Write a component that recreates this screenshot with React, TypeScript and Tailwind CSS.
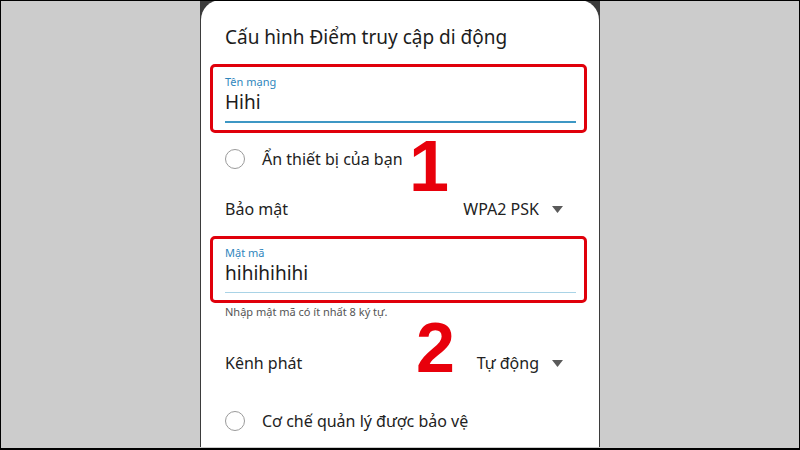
import React from 'react'

const font = { fontFamily: '"Noto Sans", "Open Sans", sans-serif' }

function Caret() {
    return (
        <svg width="11" height="7" viewBox="0 0 11 7" className="ml-[13px]">
            <path d="M0 0h11L5.5 7z" fill="#5a5a5a" />
        </svg>
    )
}

function Radio({ label }: { label: string }) {
    return (
        <div className="flex items-center h-[40px]">
            <div className="w-[20px] h-[20px] rounded-full border-[1.5px] border-[#9a9a9a]"></div>
            <span className="ml-[17px] text-[16px] text-[#222]">{label}</span>
        </div>
    )
}

function Field({ label, value, line, lineH, pt }: { label: string; value: string; line: string; lineH: string; pt: string }) {
    return (
        <div className={`-ml-[15px] w-[377px] border-[3px] border-[#e0000b] rounded-[5px] pl-[12px] ${pt}`}>
            <div className="text-[11px] leading-[14px] text-[#2f86bd]">{label}</div>
            <div className="text-[19px] leading-[26px] text-[#1c1c1c]">{value}</div>
            <div className={`mt-[6px] w-[351px] ${lineH} ${line}`}></div>
        </div>
    )
}

export default function App() {
    return (
        <div className="w-[800px] h-[450px] bg-[#cccccc] border border-black border-b-2 flex justify-center overflow-hidden" style={font}>
            <div className="w-[400px] h-full bg-[#3b3b3b] -mt-px">
                <div className="relative h-full bg-white rounded-t-[20px] mx-[1px] pl-[24px] pr-[36px] pt-[23px]">
                    <div className="text-[19px] leading-[28px] text-[#1c1c1c]">Cấu hình Điểm truy cập di động</div>

                    <div className="mt-[13px]">
                        <Field label="Tên mạng" value="Hihi" line="bg-[#3d97c4]" lineH="h-[2px]" pt="pt-[8px] pb-[7px]" />
                    </div>

                    <div className="mt-[6px]">
                        <Radio label="Ẩn thiết bị của bạn" />
                    </div>

                    <div className="mt-[10px] flex items-center justify-between h-[40px] text-[16px] text-[#222]">
                        <span>Bảo mật</span>
                        <div className="flex items-center">
                            <span>WPA2 PSK</span>
                            <Caret />
                        </div>
                    </div>

                    <div className="mt-[7px]">
                        <Field label="Mật mã" value="hihihihihi" line="bg-[#a9d3e6]" lineH="h-px" pt="pt-[7px] pb-[7px]" />
                    </div>

                    <div className="mt-[2px] text-[11px] leading-[14px] text-[#555]">Nhập mật mã có ít nhất 8 ký tự.</div>

                    <div className="mt-[24px] flex items-center justify-between h-[40px] text-[16px] text-[#222]">
                        <span>Kênh phát</span>
                        <div className="flex items-center">
                            <span>Tự động</span>
                            <Caret />
                        </div>
                    </div>

                    <div className="mt-[18px]">
                        <Radio label="Cơ chế quản lý được bảo vệ" />
                    </div>

                    <div className="absolute left-[208px] top-[130px] text-[72px] leading-none font-bold text-[#e8000b]" style={{ fontFamily: '"Liberation Sans", Arial, sans-serif' }}>1</div>
                    <div className="absolute left-[215px] top-[313px] text-[70px] leading-none font-bold text-[#e8000b]" style={{ fontFamily: '"Liberation Sans", Arial, sans-serif' }}>2</div>
                </div>
            </div>
        </div>
    )
}
